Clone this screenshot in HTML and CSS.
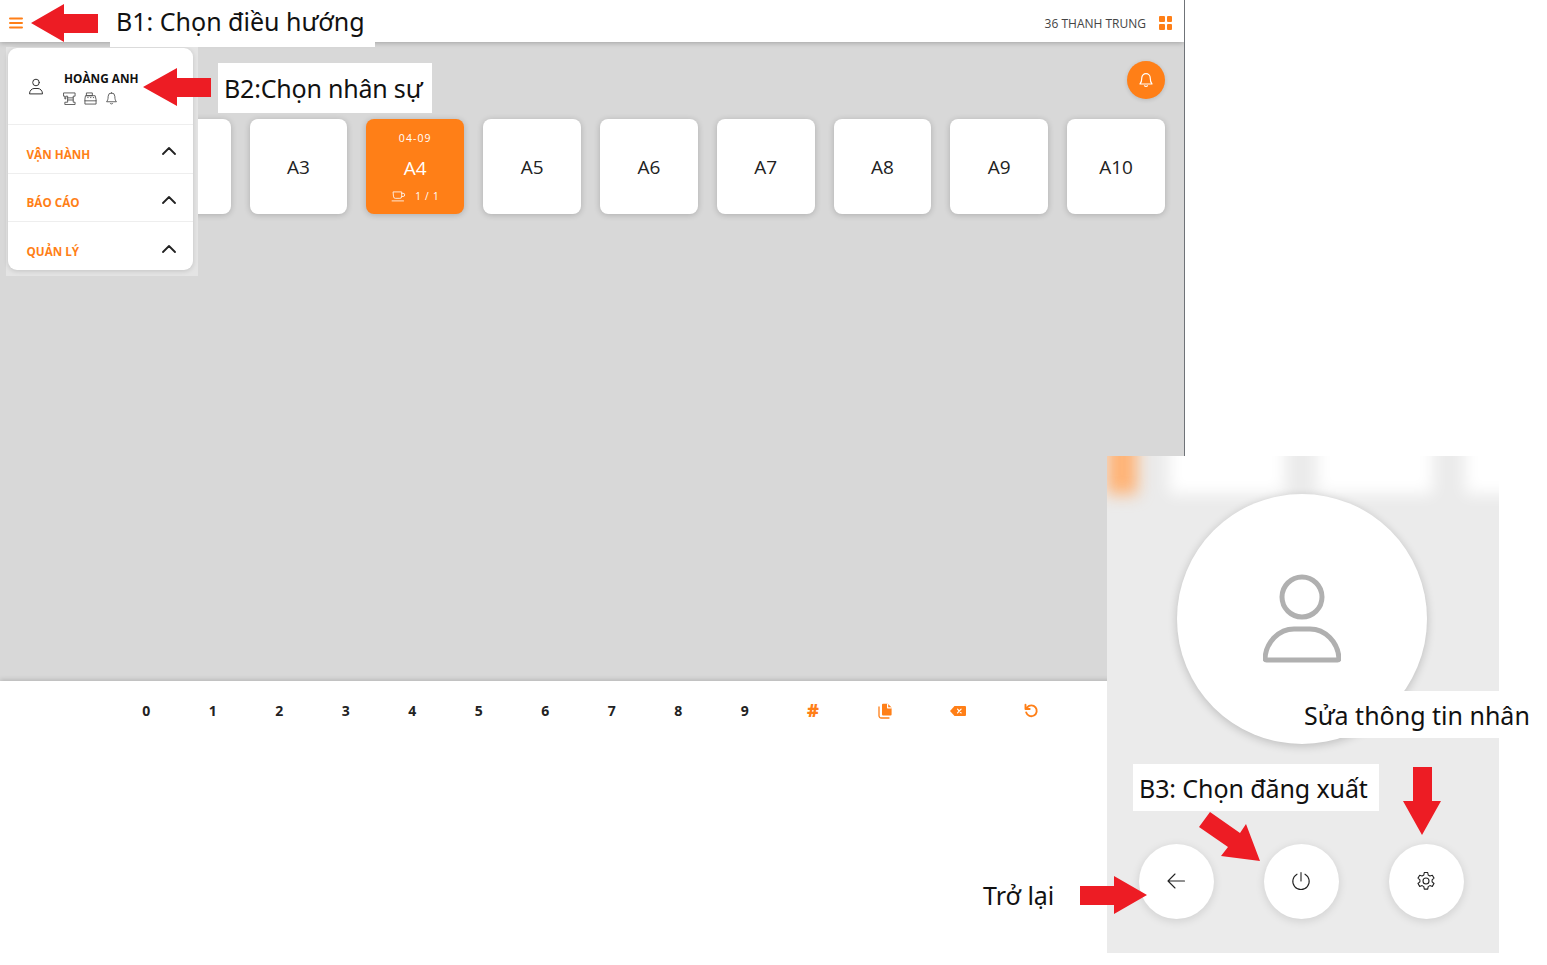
FILE: index.html
```html
<!DOCTYPE html>
<html lang="en">
<head>
    <meta charset="UTF-8">
    <meta name="viewport" content="width=device-width, initial-scale=1.0">
    <title>Hướng dẫn đăng xuất</title>
    <link rel="stylesheet" href="styles.css">
</head>
<body>
    <div class="app">
        <header class="topbar">
            <div class="topbar-left">
                <svg class="hamburger" viewBox="0 0 14 12"><path d="M1 1.5h12M1 6h12M1 10.5h12"/></svg>
                <span class="topbar-title">TABLES</span>
            </div>
            <div class="topbar-right">
                <span class="store-name">36 THANH TRUNG</span>
                <div class="grid-icon"><i></i><i></i><i></i><i></i></div>
            </div>
        </header>

        <main class="floor">
            <div class="floor-actions">
                <button class="bell-btn">
                    <svg viewBox="0 0 16 16"><path d="M8 1.6a4.2 4.2 0 0 0-4.2 4.2c0 3.6-.7 5-1.8 6.2h12c-1.100-1.200-1.800-2.600-1.800-6.200A4.200 4.200 0 0 0 8 1.600zM6.500 13.800c.5.800 2.500.8 3 0"/></svg>
                </button>
            </div>
            <div class="table-row">
                <div class="table-card"></div>
                <div class="table-card"></div>
                <div class="table-card">A3</div>
                <div class="table-card busy">
                    <span class="busy-date">04-09</span>
                    <span class="busy-name">A4</span>
                    <span class="busy-meta">
                        <svg viewBox="0 0 16 12"><path d="M2.500 1h9v5a2 2 0 0 1-2 2h-5a2 2 0 0 1-2-2zM11.500 2.500h1.500a1.500 1.500 0 0 1 0 3.500h-1.500M1 10.800h12.500"/></svg>
                        1 / 1
                    </span>
                </div>
                <div class="table-card">A5</div>
                <div class="table-card">A6</div>
                <div class="table-card">A7</div>
                <div class="table-card">A8</div>
                <div class="table-card">A9</div>
                <div class="table-card">A10</div>
            </div>
        </main>

        <footer class="keypad">
            <span class="key">0</span>
            <span class="key">1</span>
            <span class="key">2</span>
            <span class="key">3</span>
            <span class="key">4</span>
            <span class="key">5</span>
            <span class="key">6</span>
            <span class="key">7</span>
            <span class="key">8</span>
            <span class="key">9</span>
            <span class="key key-hash">#</span>
            <span class="key key-copy">
                <svg viewBox="0 0 16 16"><path class="fill" d="M6 .8h4.800L14.600 4.600V11.500a1 1 0 0 1-1 1H6a1 1 0 0 1-1-1V1.800a1 1 0 0 1 1-1z"/><path class="cross" d="M10.600 1v3.800h3.800"/><path d="M2 4v8.800a2.200 2.200 0 0 0 2.200 2.200H12"/></svg>
            </span>
            <span class="key key-back">
                <svg viewBox="0 0 18 12"><path class="fill" d="M5.500 1H16a1 1 0 0 1 1 1v8a1 1 0 0 1-1 1H5.500L1 6z"/><path class="cross" d="M8.500 4.200l3.600 3.600M12.100 4.200L8.500 7.800"/></svg>
            </span>
            <span class="key key-undo">
                <svg viewBox="0 0 16 16"><path class="bold" d="M3.200 9.500a5.400 5.400 0 1 0 1-5.200L2.500 6M2.500 1.800V6h4.200"/></svg>
            </span>
        </footer>
    </div>

    <!-- slide menu -->
    <aside class="side-wrap">
        <div class="side-menu">
            <div class="side-user">
                <svg class="user-icon" viewBox="0 0 16 17"><circle cx="8" cy="4.500" r="3.300"/><path d="M1.500 15.500c0-3 2.500-5 4.500-5h4c2 0 4.500 2 4.500 5z"/></svg>
                <div class="user-info">
                    <div class="user-name">HOÀNG ANH</div>
                    <div class="user-roles">
                        <svg viewBox="0 0 14 14"><path d="M1 1h12v3.500h-2v6.500h2v2.500H2V11h3V4.500H3v3H2V4.500H1zM5 6.300h6M5 8.600h6"/></svg>
                        <svg viewBox="0 0 14 14"><path d="M3 1h6v3H3zM2 4h10l1 4v5H1V8zM1 9.500h12M4 6h.5M7 6h.5M10 6h.5"/></svg>
                        <svg viewBox="0 0 14 14"><path d="M7 1a3.600 3.600 0 0 0-3.600 3.600c0 3.400-.7 4.700-1.700 5.900h10.600c-1-1.200-1.700-2.500-1.700-5.900A3.600 3.600 0 0 0 7 1zM5.600 12.300c.4.800 2.400.8 2.800 0"/></svg>
                    </div>
                </div>
            </div>
            <div class="side-item"><span>VẬN HÀNH</span><svg viewBox="0 0 14 8"><path d="M1 7l6-6 6 6"/></svg></div>
            <div class="side-item"><span>BÁO CÁO</span><svg viewBox="0 0 14 8"><path d="M1 7l6-6 6 6"/></svg></div>
            <div class="side-item"><span>QUẢN LÝ</span><svg viewBox="0 0 14 8"><path d="M1 7l6-6 6 6"/></svg></div>
        </div>
    </aside>

    <!-- profile popup -->
    <section class="profile">
        <div class="blur-row">
            <div class="blur-card first"></div>
            <div class="blur-card"></div>
            <div class="blur-card"></div>
            <div class="blur-card"></div>
        </div>
        <div class="avatar">
            <svg viewBox="0 0 78 90"><circle cx="39" cy="23" r="20"/><path d="M3.500 86c-1 0-1.500-.5-1.500-1.500C3 68 16 55 31 55h16c15 0 28 13 29 29.500 0 1-.5 1.500-1.500 1.500z"/></svg>
        </div>
        <div class="profile-actions">
            <button class="round-btn">
                <svg viewBox="0 0 20 20"><path d="M18.500 10H2M9 3l-7 7 7 7"/></svg>
            </button>
            <button class="round-btn">
                <svg viewBox="0 0 20 20"><path d="M10 1.500V10M6 3.200a8.200 8.200 0 1 0 8 0"/></svg>
            </button>
            <button class="round-btn">
                <svg viewBox="0 0 20 20"><circle cx="10" cy="10" r="3"/><path d="M8.300 1.500h3.400l.5 2.500 1.700 1 2.400-.8 1.700 2.900-1.900 1.700v2l1.900 1.700-1.700 2.900-2.400-.8-1.700 1-.5 2.500H8.300l-.5-2.500-1.700-1-2.400.8-1.700-2.900 1.900-1.700v-2L2 7.100l1.700-2.900 2.400.8 1.700-1z"/></svg>
            </button>
        </div>
    </section>

    <!-- callouts drawn over the screenshot -->
    <div class="callout callout-b1">B1: Chọn điều hướng</div>
    <div class="callout callout-b2">B2:Chọn nhân sự</div>
    <div class="callout callout-edit">Sửa thông tin nhân</div>
    <div class="callout callout-b3">B3: Chọn đăng xuất</div>
    <div class="callout callout-back">Trở lại</div>

    <svg class="arrows" viewBox="0 0 1547 965">
        <polygon points="31,23 64,4 64,14 98,14 98,33 64,33 64,42"/>
        <polygon points="143,87 177,68 177,78 211,78 211,97 177,97 177,106"/>
        <polygon points="1147,895 1114,876 1114,886 1080,886 1080,905 1114,905 1114,914"/>
        <polygon points="1422,835 1403,801 1413,801 1413,767 1432,767 1432,801 1441,801"/>
        <polygon points="1210,812 1240,833 1246,824 1260,861 1221,856 1228,847 1199,827"/>
    </svg>
</body>
</html>
```

FILE: styles.css
```css
* {
    box-sizing: border-box;
    margin: 0;
    padding: 0;
}
html, body {
    height: 100%;
    overflow: hidden;
}
body {
    position: relative;
    background: #fff;
    font-family: 'Open Sans', sans-serif;
    color: #222;
}
svg {
    display: block;
    fill: none;
    stroke: currentColor;
    stroke-linecap: round;
    stroke-linejoin: round;
}
.app {
    width: 1185px;
    height: 953px;
    display: flex;
    flex-direction: column;
    border-right: 1px solid #6f7378;
    overflow: hidden;
}
.topbar {
    height: 42px;
    flex: none;
    display: flex;
    align-items: center;
    justify-content: space-between;
    padding: 4px 12px 0 9px;
    background: #fff;
    box-shadow: 0 1px 5px rgba(0, 0, 0, .25);
    position: relative;
}
.topbar-left {
    display: flex;
    align-items: center;
    gap: 26px;
}
.hamburger {
    width: 14px;
    height: 12px;
    color: #ff7f17;
    stroke-width: 2;
}
.topbar-title {
    font-size: 13px;
    font-weight: 700;
}
.topbar-right {
    display: flex;
    align-items: center;
    gap: 13px;
}
.store-name {
    font-size: 12px;
    color: #444;
}
.grid-icon {
    width: 13px;
    height: 14px;
    display: grid;
    grid-template-columns: 1fr 1fr;
    gap: 2px;
}
.grid-icon i {
    background: #ff7f17;
    border-radius: 1px;
}
.floor {
    height: 639px;
    flex: none;
    background: #d8d8d8;
    padding: 19px 19px 0 16px;
}
.floor-actions {
    display: flex;
    justify-content: flex-end;
    height: 58px;
}
.bell-btn {
    width: 38px;
    height: 38px;
    border: none;
    border-radius: 50%;
    background: #ff7f17;
    color: #fff;
    display: flex;
    align-items: center;
    justify-content: center;
    box-shadow: 0 1px 4px rgba(0, 0, 0, .15);
}
.bell-btn svg {
    width: 16px;
    height: 16px;
    stroke-width: 1.200;
}
.table-row {
    display: flex;
    gap: 19px;
}
.table-card {
    width: 97.800px;
    height: 95px;
    flex: none;
    display: flex;
    flex-direction: column;
    align-items: center;
    justify-content: center;
    background: #fff;
    border-radius: 8px;
    box-shadow: 0 1px 6px rgba(0, 0, 0, .2);
    font-size: 19px;
}
.table-card.busy {
    background: #ff7f17;
    color: #fff;
    justify-content: flex-start;
    padding-top: 11px;
}
.busy-date {
    font-size: 10.500px;
    line-height: 16px;
    letter-spacing: 1.100px;
}
.busy-name {
    font-size: 19px;
    line-height: 24px;
    margin-top: 10px;
}
.busy-meta {
    display: flex;
    align-items: center;
    gap: 9px;
    font-size: 10px;
    line-height: 14px;
    margin-top: 9px;
    letter-spacing: .8px;
}
.busy-meta svg {
    width: 15px;
    height: 11px;
    stroke-width: .9;
}
.keypad {
    flex: 1;
    display: flex;
    align-items: flex-start;
    padding: 19px 0 0 113px;
    background: #fff;
    box-shadow: 0 -1px 5px rgba(0, 0, 0, .18);
    position: relative;
}
.key {
    width: 66.500px;
    height: 20px;
    display: flex;
    align-items: center;
    justify-content: center;
    font-size: 14px;
    font-weight: 700;
}
.key-hash, .key-copy, .key-back, .key-undo {
    color: #ff7f17;
}
.key-hash {
    width: 70px;
    font-size: 18px;
    font-weight: 800;
}
.key-copy {
    width: 74px;
}
.key-back {
    width: 72px;
}
.key-undo {
    width: 74px;
}
.key svg {
    width: 16px;
    height: 16px;
    stroke-width: 1.300;
    margin-top: 1px;
}
.key-back svg {
    width: 18px;
    height: 12px;
}
.key .fill {
    fill: currentColor;
    stroke: none;
}
.key .cross {
    stroke: #fff;
    stroke-width: 1.200;
}
.key .bold {
    stroke-width: 1.900;
}

/* slide menu */
.side-wrap {
    position: absolute;
    left: 6px;
    top: 47px;
    width: 192px;
    height: 229px;
    padding: 1px 5px 0 2px;
    background: #e4e4e4;
}
.side-menu {
    height: 222px;
    background: #fff;
    border-radius: 9px;
    box-shadow: 0 1px 5px rgba(0, 0, 0, .15);
}
.side-user {
    height: 77px;
    display: flex;
    align-items: center;
    gap: 20px;
    padding: 0 0 0 20px;
    border-bottom: 1px solid #eee;
}
.user-icon {
    width: 16px;
    height: 17px;
    color: #333;
    stroke-width: 1;
}
.user-info {
    margin-top: 2px;
}
.user-name {
    font-size: 11.800px;
    font-weight: 700;
    line-height: 16px;
    color: #111;
}
.user-roles {
    display: flex;
    gap: 8px;
    margin: 6px 0 0 -1px;
    color: #444;
}
.user-roles svg {
    width: 13px;
    height: 13px;
    stroke-width: .9;
}
.side-item {
    height: 48.500px;
    display: flex;
    align-items: center;
    justify-content: space-between;
    padding: 10px 17px 0 18.500px;
    border-bottom: 1px solid #eee;
    font-size: 11.700px;
    font-weight: 700;
    color: #ff7f17;
}
.side-item:last-child {
    border-bottom: none;
}
.side-item svg {
    width: 14px;
    height: 8px;
    color: #222;
    stroke-width: 1.800;
    margin-top: -5px;
}

/* profile popup */
.profile {
    position: absolute;
    left: 1107px;
    top: 456px;
    width: 392px;
    height: 497px;
    background: #ebebeb;
    overflow: hidden;
    display: flex;
    flex-direction: column;
}
.blur-row {
    height: 38px;
    display: flex;
    gap: 32px;
    flex: none;
}
.blur-card {
    width: 116px;
    height: 58px;
    margin-top: -20px;
    flex: none;
    background: #fff;
    filter: blur(8px);
}
.blur-card.first {
    width: 30px;
    background: #ffb274;
}
.avatar {
    width: 250px;
    height: 250px;
    flex: none;
    margin-left: 70px;
    display: flex;
    align-items: center;
    justify-content: center;
    background: #fff;
    border-radius: 50%;
    box-shadow: 0 2px 10px rgba(0, 0, 0, .2);
    position: relative;
}
.avatar svg {
    width: 78px;
    height: 90px;
    color: #b0b0b0;
    stroke-width: 5;
    margin-top: -1px;
}
.profile-actions {
    display: flex;
    gap: 50px;
    margin: 100px 0 0 32px;
}
.round-btn {
    width: 75px;
    height: 75px;
    border: none;
    border-radius: 50%;
    background: #fff;
    color: #222;
    display: flex;
    align-items: center;
    justify-content: center;
    box-shadow: 0 2px 10px rgba(0, 0, 0, .12);
}
.round-btn svg {
    width: 20px;
    height: 20px;
    stroke-width: 1.100;
    margin: -1px 1px 0 0;
}

/* callouts */
.callout {
    position: absolute;
    background: #fff;
    color: #111;
    font-family: 'Noto Sans', sans-serif;
    font-size: 25px;
    line-height: 34px;
    white-space: nowrap;
}
.callout-b1 {
    left: 110px;
    top: 0;
    width: 265px;
    height: 47px;
    padding: 4px 0 0 6px;
}
.callout-b2 {
    left: 218px;
    top: 63px;
    width: 214px;
    height: 50px;
    padding: 8px 0 0 6px;
    letter-spacing: -.2px;
}
.callout-edit {
    left: 1297px;
    top: 691px;
    width: 240px;
    height: 47px;
    padding: 7px 0 0 7px;
}
.callout-b3 {
    left: 1133px;
    top: 764px;
    width: 246px;
    height: 47px;
    padding: 7px 0 0 6px;
    letter-spacing: -.1px;
}
.callout-back {
    left: 983px;
    top: 878px;
    background: none;
}
.arrows {
    position: absolute;
    left: 0;
    top: 0;
    width: 1547px;
    height: 965px;
    pointer-events: none;
}
.arrows polygon {
    fill: #ed1c24;
    stroke: none;
}
```
